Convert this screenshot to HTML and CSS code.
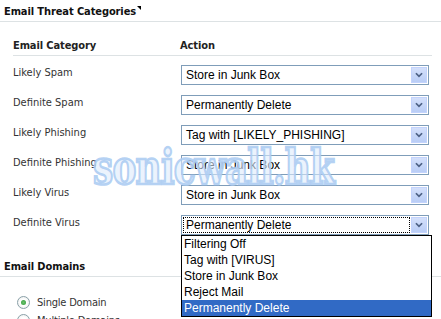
FILE: index.html
```html
<!DOCTYPE html>
<html lang="en">
<head>
  <meta charset="UTF-8" />
  <title>Email Threat Categories</title>
  <link rel="stylesheet" href="styles.css">
</head>
<body>
<div class="page">
  <h2 class="section-title">Email Threat Categories<span class="corner"></span></h2>

  <div class="cat-table">
    <div class="cat-head">
      <span>Email Category</span>
      <span>Action</span>
    </div>

    <div class="cat-rows">
      <div class="cat-row">
        <span class="cat-label">Likely Spam</span>
        <div class="select"><span class="select-text">Store in Junk Box</span><span class="select-btn"><svg viewBox="0 0 16 16" width="16" height="16"><polyline points="4.5,6 8,9.5 11.5,6" fill="none" stroke="#4d6185" stroke-width="2"/></svg></span></div>
      </div>
      <div class="cat-row">
        <span class="cat-label">Definite Spam</span>
        <div class="select"><span class="select-text">Permanently Delete</span><span class="select-btn"><svg viewBox="0 0 16 16" width="16" height="16"><polyline points="4.5,6 8,9.5 11.5,6" fill="none" stroke="#4d6185" stroke-width="2"/></svg></span></div>
      </div>
      <div class="cat-row">
        <span class="cat-label">Likely Phishing</span>
        <div class="select"><span class="select-text">Tag with [LIKELY_PHISHING]</span><span class="select-btn"><svg viewBox="0 0 16 16" width="16" height="16"><polyline points="4.5,6 8,9.5 11.5,6" fill="none" stroke="#4d6185" stroke-width="2"/></svg></span></div>
      </div>
      <div class="cat-row">
        <span class="cat-label">Definite Phishing</span>
        <div class="select"><span class="select-text">Store in Junk Box</span><span class="select-btn"><svg viewBox="0 0 16 16" width="16" height="16"><polyline points="4.5,6 8,9.5 11.5,6" fill="none" stroke="#4d6185" stroke-width="2"/></svg></span></div>
      </div>
      <div class="cat-row">
        <span class="cat-label">Likely Virus</span>
        <div class="select"><span class="select-text">Store in Junk Box</span><span class="select-btn"><svg viewBox="0 0 16 16" width="16" height="16"><polyline points="4.5,6 8,9.5 11.5,6" fill="none" stroke="#4d6185" stroke-width="2"/></svg></span></div>
      </div>
      <div class="cat-row">
        <span class="cat-label">Definite Virus</span>
        <div class="select open">
          <span class="select-text focused">Permanently Delete</span><span class="select-btn"><svg viewBox="0 0 16 16" width="16" height="16"><polyline points="4.5,6 8,9.5 11.5,6" fill="none" stroke="#4d6185" stroke-width="2"/></svg></span>
          <ul class="select-list">
            <li>Filtering Off</li>
            <li>Tag with [VIRUS]</li>
            <li>Store in Junk Box</li>
            <li>Reject Mail</li>
            <li class="selected">Permanently Delete</li>
          </ul>
        </div>
      </div>
    </div>
  </div>

  <h2 class="section-title domains">Email Domains</h2>
  <div class="radios">
    <label class="radio"><span class="radio-dot checked"></span>Single Domain</label>
    <label class="radio"><span class="radio-dot"></span>Multiple Domains</label>
  </div>

  <div class="watermark">sonicwall.hk</div>
</div>
</body>
</html>
```

FILE: styles.css
```css
* { box-sizing: border-box; }
body {
  margin: 0;
  background: #fff;
  color: #333;
  font-family: "DejaVu Sans Condensed", "DejaVu Sans", sans-serif;
  font-size: 11px;
  overflow: hidden;
}
.page { position: relative; width: 441px; height: 319px; }

.section-title {
  margin: 0;
  padding: 5px 0 2px 4px;
  font-size: 11px;
  line-height: 14px;
  font-weight: bold;
  letter-spacing: -0.1px;
  color: #111;
  border-bottom: 1px solid #dde2e4;
  position: relative;
}
.corner {
  display: inline-block;
  width: 0; height: 0;
  border-top: 4px solid #000;
  border-left: 4px solid transparent;
  vertical-align: top;
  margin: 1px 0 0 1px;
}

.cat-table { margin-left: 13px; width: 419px; }
.cat-head {
  display: grid;
  grid-template-columns: 167px 1fr;
  margin-top: 17px;
  padding-bottom: 2px;
  line-height: 14px;
  font-size: 11px;
  font-weight: bold;
  letter-spacing: -0.1px;
  color: #222;
  border-bottom: 1px solid #dde2e4;
}
.cat-rows { display: flex; flex-direction: column; gap: 10px; padding-top: 9px; }
.cat-row {
  display: grid;
  grid-template-columns: 168px 248px;
  align-items: start;
}
.cat-label { line-height: 14px; padding-top: 1px; color: #333; }

.select {
  position: relative;
  display: flex;
  height: 20px;
  border: 1px solid #7f9db9;
  background: #fff;
  padding: 1px;
  font-family: "Liberation Sans", Arial, sans-serif;
  font-size: 12px;
  color: #000;
}
.select-text {
  flex: 1;
  line-height: 16px;
  padding-left: 3px;
  white-space: nowrap;
}
.select-text.focused { outline: 1px dotted #000; outline-offset: -1px; }
.select-btn {
  width: 16px; height: 16px;
  margin-left: 1px;
  background: linear-gradient(#d4e0fb, #b9cdf6);
  border: 1px solid #c3d3fd;
  display: flex; align-items: center; justify-content: center;
}
.select-btn svg { display: block; }

.select-list {
  position: absolute;
  left: -1px; top: 19px;
  width: 251px;
  margin: 0; padding: 0;
  list-style: none;
  background: #fff;
  border: 1px solid #000;
  z-index: 2;
}
.select-list li { height: 16px; line-height: 16px; padding-left: 2px; }
.select-list li.selected { background: #316ac5; color: #fff; }

.domains { margin-top: 20px; }
.radios { padding: 19px 0 0 17px; display: flex; flex-direction: column; gap: 5px; }
.radio { display: flex; align-items: center; gap: 7px; font-size: 11px; line-height: 13px; color: #333; letter-spacing: -0.2px; }
.radio-dot {
  width: 13px; height: 13px;
  border-radius: 50%;
  border: 1px solid #8aa0a8;
  background: radial-gradient(circle, #fff 40%, #e6eae8 100%);
  position: relative;
}
.radio-dot.checked::after {
  content: "";
  position: absolute;
  left: 3px; top: 3px;
  width: 5px; height: 5px;
  border-radius: 50%;
  background: radial-gradient(circle, #6cc36c, #2f9a3a);
}

.watermark {
  position: absolute;
  left: 93px; top: 143px;
  font-family: "DejaVu Serif", serif;
  font-weight: bold;
  font-size: 46px;
  line-height: 46px;
  letter-spacing: -1px;
  color: rgba(222, 235, 252, 0.6);
  -webkit-text-stroke: 2.5px rgba(172, 204, 242, 0.9);
  transform: scale(0.78, 1.05);
  transform-origin: left top;
  pointer-events: none;
  z-index: 3;
}
```
